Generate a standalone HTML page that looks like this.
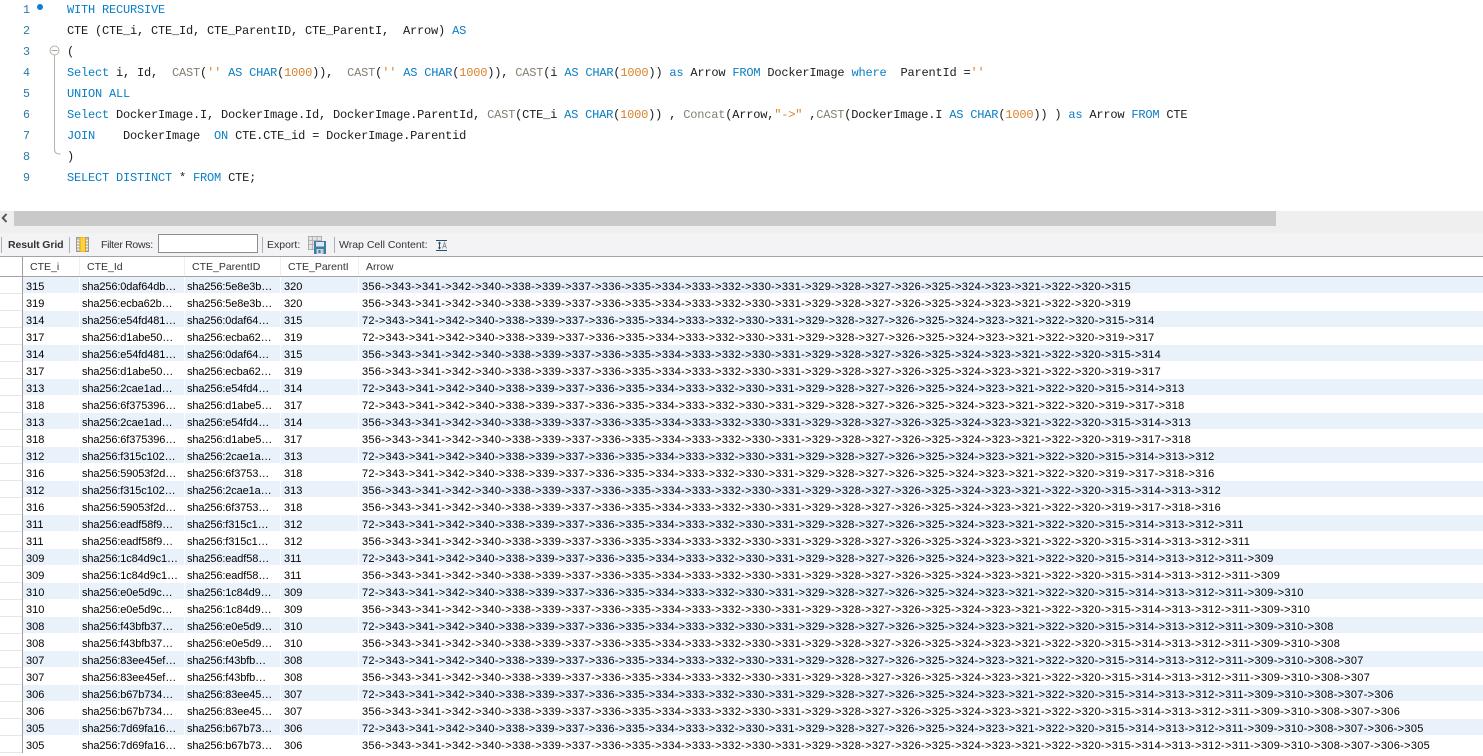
<!DOCTYPE html>
<html lang="en"><head><meta charset="utf-8"><title>MySQL Workbench</title>
<style>
html,body{margin:0;padding:0;width:1483px;height:756px;overflow:hidden;background:#fff}
body{position:relative;font-family:"Liberation Sans",sans-serif}
.abs{position:absolute}
.ln{position:absolute;left:0;width:30px;text-align:right;height:21px;font:11.67px/21px "Liberation Mono",monospace;color:#2b7aa3;margin-top:1px}
.c{position:absolute;left:67px;height:21px;font:12px/21px "Liberation Mono",monospace;letter-spacing:-.2px;color:#1a1a1a;white-space:pre;margin-top:1px}
.k{color:#0a7ec4}.f{color:#85806f}.n{color:#d9822b}
.t{position:absolute;font-size:10.5px;line-height:14px;color:#333;white-space:nowrap;top:238px}
.sep{position:absolute;top:237px;width:1px;height:16px;background:#a9b2ba}
.h{position:absolute;top:257px;height:19px;line-height:21px;font-size:10.5px;color:#333}
.hs{position:absolute;top:257px;width:1px;height:19px;background:#eee}
#g{position:absolute;left:23px;top:277px;width:1460px}
#g div{position:relative;height:17px;font-size:11px;line-height:18px;color:#000;white-space:nowrap;box-shadow:inset 0 -1px 0 #fff}
#g div:nth-child(odd){background:#e9f1fb}
#g span{position:absolute;top:1px}
#g span:nth-child(1){left:3px}#g span:nth-child(2){left:59px;letter-spacing:-.12px}#g span:nth-child(3){left:164px;letter-spacing:-.12px}#g span:nth-child(4){left:261px}#g span:nth-child(5){left:339px;letter-spacing:.31px}
#cols i{position:absolute;top:277px;width:1px;height:476px;background:#fff}
#gut i{position:absolute;left:0;width:22px;height:1px;background:#e6e6e6}
</style></head><body>

<div class="ln" style="top:-1px">1</div><div class="ln" style="top:20px">2</div><div class="ln" style="top:41px">3</div><div class="ln" style="top:62px">4</div><div class="ln" style="top:83px">5</div><div class="ln" style="top:104px">6</div><div class="ln" style="top:125px">7</div><div class="ln" style="top:146px">8</div><div class="ln" style="top:167px">9</div>

<svg class="abs" style="left:0;top:0" width="66" height="190">
<circle cx="40" cy="7" r="3" fill="#0a7fd9"/>
<circle cx="54.500" cy="50.500" r="4.500" fill="#fff" stroke="#b3b3a8"/>
<path d="M51.500 50.500h6" stroke="#a5a598" fill="none"/>
<path d="M54.500 55v94q0 5 5 5h1" stroke="#b3b3a8" fill="none"/>
</svg>

<div class="c" style="top:-1px"><span class="k">WITH RECURSIVE</span></div>
<div class="c" style="top:20px">CTE (CTE_i, CTE_Id, CTE_ParentID, CTE_ParentI,  Arrow) <span class="k">AS</span></div>
<div class="c" style="top:41px">(</div>
<div class="c" style="top:62px"><span class="k">Select</span> i, Id,  <span class="f">CAST</span>(<span class="n">''</span> <span class="k">AS CHAR</span>(<span class="n">1000</span>)),  <span class="f">CAST</span>(<span class="n">''</span> <span class="k">AS CHAR</span>(<span class="n">1000</span>)), <span class="f">CAST</span>(i <span class="k">AS CHAR</span>(<span class="n">1000</span>)) <span class="k">as</span> Arrow <span class="k">FROM</span> DockerImage <span class="k">where</span>  ParentId =<span class="n">''</span></div>
<div class="c" style="top:83px"><span class="k">UNION ALL</span></div>
<div class="c" style="top:104px"><span class="k">Select</span> DockerImage.I, DockerImage.Id, DockerImage.ParentId, <span class="f">CAST</span>(CTE_i <span class="k">AS CHAR</span>(<span class="n">1000</span>)) , <span class="f">Concat</span>(Arrow,<span class="n">"-&gt;"</span> ,<span class="f">CAST</span>(DockerImage.I <span class="k">AS CHAR</span>(<span class="n">1000</span>)) ) <span class="k">as</span> Arrow <span class="k">FROM</span> CTE</div>
<div class="c" style="top:125px"><span class="k">JOIN</span>    DockerImage  <span class="k">ON</span> CTE.CTE_id = DockerImage.Parentid</div>
<div class="c" style="top:146px">)</div>
<div class="c" style="top:167px"><span class="k">SELECT DISTINCT</span> * <span class="k">FROM</span> CTE;</div>

<div class="abs" style="left:0;top:211px;width:1483px;height:22px;background:#efefef"></div>
<div class="abs" style="left:14px;top:211px;width:1262px;height:15px;background:#c9c9c9"></div>
<svg class="abs" style="left:0;top:212px" width="12" height="12"><path d="M6.500 2L2.800 6L6.500 10" fill="none" stroke="#555" stroke-width="2"/></svg>

<div class="abs" style="left:0;top:233px;width:1483px;height:23px;background:#f3f3f5"></div>
<div class="abs" style="left:0;top:256px;width:1483px;height:1px;background:#a3a3a3"></div>
<div class="sep" style="left:1px"></div>
<div class="t" style="left:8px;font-weight:bold;letter-spacing:-.1px;font-size:10.5px">Result Grid</div>
<div class="sep" style="left:69px"></div>
<svg class="abs" style="left:76px;top:237px" width="14" height="15"><rect x=".5" y=".5" width="12" height="14" fill="#c4c4c4" stroke="#9a9a9a"/><path d="M1 3.500h11M1 6.500h11M1 9.500h11M1 12.500h11" stroke="#eee"/><rect x="4" y="0" width="5.500" height="15" fill="#fbd34a" stroke="#eda000"/></svg>
<div class="t" style="left:101px;letter-spacing:-.3px">Filter Rows:</div>
<div class="abs" style="left:158px;top:234px;width:98px;height:17px;background:#fff;border:1px solid #8c8c8c"></div>
<div class="sep" style="left:262px"></div>
<div class="t" style="left:267px">Export:</div>
<svg class="abs" style="left:308px;top:236px" width="19" height="19"><rect x=".5" y=".5" width="13" height="13" fill="#e4e4e4" stroke="#adadad"/><path d="M4.500 1v12M9 1v12M1 4.500h12M1 8.500h12" stroke="#b5b5b5"/><rect x="6" y="5" width="12" height="13" fill="#3f7da6"/><rect x="8" y="6" width="8" height="4.500" fill="#dfe8ee"/><rect x="8.500" y="13" width="7" height="5" fill="#c6d3dc"/><rect x="10.500" y="14" width="2" height="3" fill="#3f7da6"/></svg>
<div class="sep" style="left:334px"></div>
<div class="t" style="left:339px">Wrap Cell Content:</div>
<svg class="abs" style="left:436px;top:239px" width="12" height="13"><path d="M0 1.500h11M0 11.500h11" stroke="#24506e" fill="none"/><path d="M3.500 3v7" stroke="#24506e"/><path d="M1.800 4.500L3.500 2.500l1.700 2zM1.800 8.500L3.500 10.500l1.700-2z" fill="#24506e"/><path d="M6.500 9.500L8.500 3.500l2 6M7.200 7.500h2.600" stroke="#8a949b" fill="none"/></svg>

<div class="abs" style="left:22px;top:257px;width:1px;height:496px;background:#a0a0a0"></div>
<div class="h" style="left:30px">CTE_i</div><div class="hs" style="left:79px"></div>
<div class="h" style="left:87px">CTE_Id</div><div class="hs" style="left:184px"></div>
<div class="h" style="left:192px">CTE_ParentID</div><div class="hs" style="left:280px"></div>
<div class="h" style="left:288px">CTE_ParentI</div><div class="hs" style="left:358px"></div>
<div class="h" style="left:366px">Arrow</div>
<div class="abs" style="left:0;top:276px;width:1483px;height:1px;background:#a3a3a3"></div>

<div id="gut">
<i style="top:293px"></i><i style="top:310px"></i><i style="top:327px"></i><i style="top:344px"></i><i style="top:361px"></i><i style="top:378px"></i><i style="top:395px"></i><i style="top:412px"></i><i style="top:429px"></i><i style="top:446px"></i><i style="top:463px"></i><i style="top:480px"></i><i style="top:497px"></i><i style="top:514px"></i><i style="top:531px"></i><i style="top:548px"></i><i style="top:565px"></i><i style="top:582px"></i><i style="top:599px"></i><i style="top:616px"></i><i style="top:633px"></i><i style="top:650px"></i><i style="top:667px"></i><i style="top:684px"></i><i style="top:701px"></i><i style="top:718px"></i><i style="top:735px"></i><i style="top:752px"></i>
</div>

<div id="g">
<div><span>315</span><span>sha256:0daf64db…</span><span>sha256:5e8e3b…</span><span>320</span><span>356-&gt;343-&gt;341-&gt;342-&gt;340-&gt;338-&gt;339-&gt;337-&gt;336-&gt;335-&gt;334-&gt;333-&gt;332-&gt;330-&gt;331-&gt;329-&gt;328-&gt;327-&gt;326-&gt;325-&gt;324-&gt;323-&gt;321-&gt;322-&gt;320-&gt;315</span></div>
<div><span>319</span><span>sha256:ecba62b…</span><span>sha256:5e8e3b…</span><span>320</span><span>356-&gt;343-&gt;341-&gt;342-&gt;340-&gt;338-&gt;339-&gt;337-&gt;336-&gt;335-&gt;334-&gt;333-&gt;332-&gt;330-&gt;331-&gt;329-&gt;328-&gt;327-&gt;326-&gt;325-&gt;324-&gt;323-&gt;321-&gt;322-&gt;320-&gt;319</span></div>
<div><span>314</span><span>sha256:e54fd481…</span><span>sha256:0daf64…</span><span>315</span><span>72-&gt;343-&gt;341-&gt;342-&gt;340-&gt;338-&gt;339-&gt;337-&gt;336-&gt;335-&gt;334-&gt;333-&gt;332-&gt;330-&gt;331-&gt;329-&gt;328-&gt;327-&gt;326-&gt;325-&gt;324-&gt;323-&gt;321-&gt;322-&gt;320-&gt;315-&gt;314</span></div>
<div><span>317</span><span>sha256:d1abe50…</span><span>sha256:ecba62…</span><span>319</span><span>72-&gt;343-&gt;341-&gt;342-&gt;340-&gt;338-&gt;339-&gt;337-&gt;336-&gt;335-&gt;334-&gt;333-&gt;332-&gt;330-&gt;331-&gt;329-&gt;328-&gt;327-&gt;326-&gt;325-&gt;324-&gt;323-&gt;321-&gt;322-&gt;320-&gt;319-&gt;317</span></div>
<div><span>314</span><span>sha256:e54fd481…</span><span>sha256:0daf64…</span><span>315</span><span>356-&gt;343-&gt;341-&gt;342-&gt;340-&gt;338-&gt;339-&gt;337-&gt;336-&gt;335-&gt;334-&gt;333-&gt;332-&gt;330-&gt;331-&gt;329-&gt;328-&gt;327-&gt;326-&gt;325-&gt;324-&gt;323-&gt;321-&gt;322-&gt;320-&gt;315-&gt;314</span></div>
<div><span>317</span><span>sha256:d1abe50…</span><span>sha256:ecba62…</span><span>319</span><span>356-&gt;343-&gt;341-&gt;342-&gt;340-&gt;338-&gt;339-&gt;337-&gt;336-&gt;335-&gt;334-&gt;333-&gt;332-&gt;330-&gt;331-&gt;329-&gt;328-&gt;327-&gt;326-&gt;325-&gt;324-&gt;323-&gt;321-&gt;322-&gt;320-&gt;319-&gt;317</span></div>
<div><span>313</span><span>sha256:2cae1ad…</span><span>sha256:e54fd4…</span><span>314</span><span>72-&gt;343-&gt;341-&gt;342-&gt;340-&gt;338-&gt;339-&gt;337-&gt;336-&gt;335-&gt;334-&gt;333-&gt;332-&gt;330-&gt;331-&gt;329-&gt;328-&gt;327-&gt;326-&gt;325-&gt;324-&gt;323-&gt;321-&gt;322-&gt;320-&gt;315-&gt;314-&gt;313</span></div>
<div><span>318</span><span>sha256:6f375396…</span><span>sha256:d1abe5…</span><span>317</span><span>72-&gt;343-&gt;341-&gt;342-&gt;340-&gt;338-&gt;339-&gt;337-&gt;336-&gt;335-&gt;334-&gt;333-&gt;332-&gt;330-&gt;331-&gt;329-&gt;328-&gt;327-&gt;326-&gt;325-&gt;324-&gt;323-&gt;321-&gt;322-&gt;320-&gt;319-&gt;317-&gt;318</span></div>
<div><span>313</span><span>sha256:2cae1ad…</span><span>sha256:e54fd4…</span><span>314</span><span>356-&gt;343-&gt;341-&gt;342-&gt;340-&gt;338-&gt;339-&gt;337-&gt;336-&gt;335-&gt;334-&gt;333-&gt;332-&gt;330-&gt;331-&gt;329-&gt;328-&gt;327-&gt;326-&gt;325-&gt;324-&gt;323-&gt;321-&gt;322-&gt;320-&gt;315-&gt;314-&gt;313</span></div>
<div><span>318</span><span>sha256:6f375396…</span><span>sha256:d1abe5…</span><span>317</span><span>356-&gt;343-&gt;341-&gt;342-&gt;340-&gt;338-&gt;339-&gt;337-&gt;336-&gt;335-&gt;334-&gt;333-&gt;332-&gt;330-&gt;331-&gt;329-&gt;328-&gt;327-&gt;326-&gt;325-&gt;324-&gt;323-&gt;321-&gt;322-&gt;320-&gt;319-&gt;317-&gt;318</span></div>
<div><span>312</span><span>sha256:f315c102…</span><span>sha256:2cae1a…</span><span>313</span><span>72-&gt;343-&gt;341-&gt;342-&gt;340-&gt;338-&gt;339-&gt;337-&gt;336-&gt;335-&gt;334-&gt;333-&gt;332-&gt;330-&gt;331-&gt;329-&gt;328-&gt;327-&gt;326-&gt;325-&gt;324-&gt;323-&gt;321-&gt;322-&gt;320-&gt;315-&gt;314-&gt;313-&gt;312</span></div>
<div><span>316</span><span>sha256:59053f2d…</span><span>sha256:6f3753…</span><span>318</span><span>72-&gt;343-&gt;341-&gt;342-&gt;340-&gt;338-&gt;339-&gt;337-&gt;336-&gt;335-&gt;334-&gt;333-&gt;332-&gt;330-&gt;331-&gt;329-&gt;328-&gt;327-&gt;326-&gt;325-&gt;324-&gt;323-&gt;321-&gt;322-&gt;320-&gt;319-&gt;317-&gt;318-&gt;316</span></div>
<div><span>312</span><span>sha256:f315c102…</span><span>sha256:2cae1a…</span><span>313</span><span>356-&gt;343-&gt;341-&gt;342-&gt;340-&gt;338-&gt;339-&gt;337-&gt;336-&gt;335-&gt;334-&gt;333-&gt;332-&gt;330-&gt;331-&gt;329-&gt;328-&gt;327-&gt;326-&gt;325-&gt;324-&gt;323-&gt;321-&gt;322-&gt;320-&gt;315-&gt;314-&gt;313-&gt;312</span></div>
<div><span>316</span><span>sha256:59053f2d…</span><span>sha256:6f3753…</span><span>318</span><span>356-&gt;343-&gt;341-&gt;342-&gt;340-&gt;338-&gt;339-&gt;337-&gt;336-&gt;335-&gt;334-&gt;333-&gt;332-&gt;330-&gt;331-&gt;329-&gt;328-&gt;327-&gt;326-&gt;325-&gt;324-&gt;323-&gt;321-&gt;322-&gt;320-&gt;319-&gt;317-&gt;318-&gt;316</span></div>
<div><span>311</span><span>sha256:eadf58f9…</span><span>sha256:f315c1…</span><span>312</span><span>72-&gt;343-&gt;341-&gt;342-&gt;340-&gt;338-&gt;339-&gt;337-&gt;336-&gt;335-&gt;334-&gt;333-&gt;332-&gt;330-&gt;331-&gt;329-&gt;328-&gt;327-&gt;326-&gt;325-&gt;324-&gt;323-&gt;321-&gt;322-&gt;320-&gt;315-&gt;314-&gt;313-&gt;312-&gt;311</span></div>
<div><span>311</span><span>sha256:eadf58f9…</span><span>sha256:f315c1…</span><span>312</span><span>356-&gt;343-&gt;341-&gt;342-&gt;340-&gt;338-&gt;339-&gt;337-&gt;336-&gt;335-&gt;334-&gt;333-&gt;332-&gt;330-&gt;331-&gt;329-&gt;328-&gt;327-&gt;326-&gt;325-&gt;324-&gt;323-&gt;321-&gt;322-&gt;320-&gt;315-&gt;314-&gt;313-&gt;312-&gt;311</span></div>
<div><span>309</span><span>sha256:1c84d9c1…</span><span>sha256:eadf58…</span><span>311</span><span>72-&gt;343-&gt;341-&gt;342-&gt;340-&gt;338-&gt;339-&gt;337-&gt;336-&gt;335-&gt;334-&gt;333-&gt;332-&gt;330-&gt;331-&gt;329-&gt;328-&gt;327-&gt;326-&gt;325-&gt;324-&gt;323-&gt;321-&gt;322-&gt;320-&gt;315-&gt;314-&gt;313-&gt;312-&gt;311-&gt;309</span></div>
<div><span>309</span><span>sha256:1c84d9c1…</span><span>sha256:eadf58…</span><span>311</span><span>356-&gt;343-&gt;341-&gt;342-&gt;340-&gt;338-&gt;339-&gt;337-&gt;336-&gt;335-&gt;334-&gt;333-&gt;332-&gt;330-&gt;331-&gt;329-&gt;328-&gt;327-&gt;326-&gt;325-&gt;324-&gt;323-&gt;321-&gt;322-&gt;320-&gt;315-&gt;314-&gt;313-&gt;312-&gt;311-&gt;309</span></div>
<div><span>310</span><span>sha256:e0e5d9c…</span><span>sha256:1c84d9…</span><span>309</span><span>72-&gt;343-&gt;341-&gt;342-&gt;340-&gt;338-&gt;339-&gt;337-&gt;336-&gt;335-&gt;334-&gt;333-&gt;332-&gt;330-&gt;331-&gt;329-&gt;328-&gt;327-&gt;326-&gt;325-&gt;324-&gt;323-&gt;321-&gt;322-&gt;320-&gt;315-&gt;314-&gt;313-&gt;312-&gt;311-&gt;309-&gt;310</span></div>
<div><span>310</span><span>sha256:e0e5d9c…</span><span>sha256:1c84d9…</span><span>309</span><span>356-&gt;343-&gt;341-&gt;342-&gt;340-&gt;338-&gt;339-&gt;337-&gt;336-&gt;335-&gt;334-&gt;333-&gt;332-&gt;330-&gt;331-&gt;329-&gt;328-&gt;327-&gt;326-&gt;325-&gt;324-&gt;323-&gt;321-&gt;322-&gt;320-&gt;315-&gt;314-&gt;313-&gt;312-&gt;311-&gt;309-&gt;310</span></div>
<div><span>308</span><span>sha256:f43bfb37…</span><span>sha256:e0e5d9…</span><span>310</span><span>72-&gt;343-&gt;341-&gt;342-&gt;340-&gt;338-&gt;339-&gt;337-&gt;336-&gt;335-&gt;334-&gt;333-&gt;332-&gt;330-&gt;331-&gt;329-&gt;328-&gt;327-&gt;326-&gt;325-&gt;324-&gt;323-&gt;321-&gt;322-&gt;320-&gt;315-&gt;314-&gt;313-&gt;312-&gt;311-&gt;309-&gt;310-&gt;308</span></div>
<div><span>308</span><span>sha256:f43bfb37…</span><span>sha256:e0e5d9…</span><span>310</span><span>356-&gt;343-&gt;341-&gt;342-&gt;340-&gt;338-&gt;339-&gt;337-&gt;336-&gt;335-&gt;334-&gt;333-&gt;332-&gt;330-&gt;331-&gt;329-&gt;328-&gt;327-&gt;326-&gt;325-&gt;324-&gt;323-&gt;321-&gt;322-&gt;320-&gt;315-&gt;314-&gt;313-&gt;312-&gt;311-&gt;309-&gt;310-&gt;308</span></div>
<div><span>307</span><span>sha256:83ee45ef…</span><span>sha256:f43bfb…</span><span>308</span><span>72-&gt;343-&gt;341-&gt;342-&gt;340-&gt;338-&gt;339-&gt;337-&gt;336-&gt;335-&gt;334-&gt;333-&gt;332-&gt;330-&gt;331-&gt;329-&gt;328-&gt;327-&gt;326-&gt;325-&gt;324-&gt;323-&gt;321-&gt;322-&gt;320-&gt;315-&gt;314-&gt;313-&gt;312-&gt;311-&gt;309-&gt;310-&gt;308-&gt;307</span></div>
<div><span>307</span><span>sha256:83ee45ef…</span><span>sha256:f43bfb…</span><span>308</span><span>356-&gt;343-&gt;341-&gt;342-&gt;340-&gt;338-&gt;339-&gt;337-&gt;336-&gt;335-&gt;334-&gt;333-&gt;332-&gt;330-&gt;331-&gt;329-&gt;328-&gt;327-&gt;326-&gt;325-&gt;324-&gt;323-&gt;321-&gt;322-&gt;320-&gt;315-&gt;314-&gt;313-&gt;312-&gt;311-&gt;309-&gt;310-&gt;308-&gt;307</span></div>
<div><span>306</span><span>sha256:b67b734…</span><span>sha256:83ee45…</span><span>307</span><span>72-&gt;343-&gt;341-&gt;342-&gt;340-&gt;338-&gt;339-&gt;337-&gt;336-&gt;335-&gt;334-&gt;333-&gt;332-&gt;330-&gt;331-&gt;329-&gt;328-&gt;327-&gt;326-&gt;325-&gt;324-&gt;323-&gt;321-&gt;322-&gt;320-&gt;315-&gt;314-&gt;313-&gt;312-&gt;311-&gt;309-&gt;310-&gt;308-&gt;307-&gt;306</span></div>
<div><span>306</span><span>sha256:b67b734…</span><span>sha256:83ee45…</span><span>307</span><span>356-&gt;343-&gt;341-&gt;342-&gt;340-&gt;338-&gt;339-&gt;337-&gt;336-&gt;335-&gt;334-&gt;333-&gt;332-&gt;330-&gt;331-&gt;329-&gt;328-&gt;327-&gt;326-&gt;325-&gt;324-&gt;323-&gt;321-&gt;322-&gt;320-&gt;315-&gt;314-&gt;313-&gt;312-&gt;311-&gt;309-&gt;310-&gt;308-&gt;307-&gt;306</span></div>
<div><span>305</span><span>sha256:7d69fa16…</span><span>sha256:b67b73…</span><span>306</span><span>72-&gt;343-&gt;341-&gt;342-&gt;340-&gt;338-&gt;339-&gt;337-&gt;336-&gt;335-&gt;334-&gt;333-&gt;332-&gt;330-&gt;331-&gt;329-&gt;328-&gt;327-&gt;326-&gt;325-&gt;324-&gt;323-&gt;321-&gt;322-&gt;320-&gt;315-&gt;314-&gt;313-&gt;312-&gt;311-&gt;309-&gt;310-&gt;308-&gt;307-&gt;306-&gt;305</span></div>
<div><span>305</span><span>sha256:7d69fa16…</span><span>sha256:b67b73…</span><span>306</span><span>356-&gt;343-&gt;341-&gt;342-&gt;340-&gt;338-&gt;339-&gt;337-&gt;336-&gt;335-&gt;334-&gt;333-&gt;332-&gt;330-&gt;331-&gt;329-&gt;328-&gt;327-&gt;326-&gt;325-&gt;324-&gt;323-&gt;321-&gt;322-&gt;320-&gt;315-&gt;314-&gt;313-&gt;312-&gt;311-&gt;309-&gt;310-&gt;308-&gt;307-&gt;306-&gt;305</span></div>
</div>
<div id="cols"><i style="left:79px"></i><i style="left:184px"></i><i style="left:280px"></i><i style="left:358px"></i></div>
</body></html>
